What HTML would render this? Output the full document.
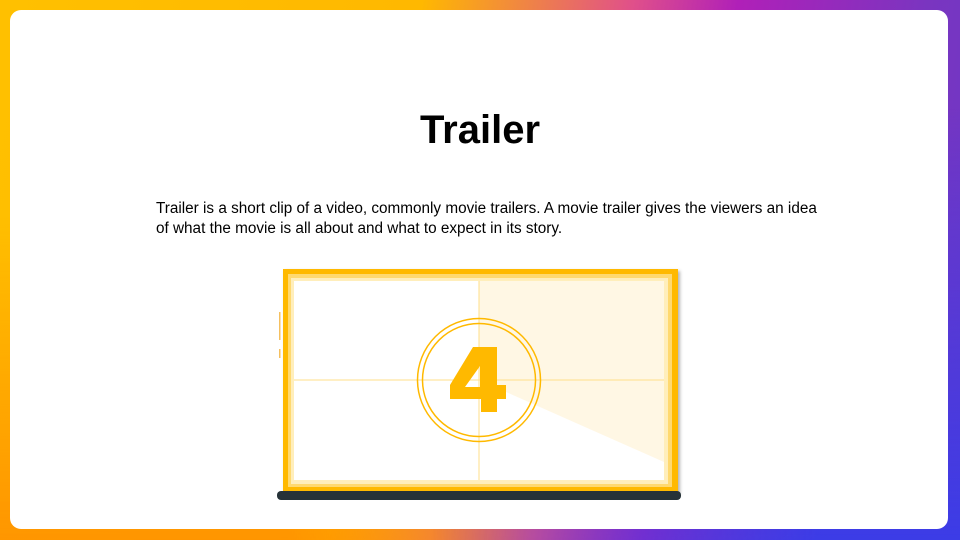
<!DOCTYPE html>
<html><head><style>
html,body{margin:0;padding:0}
body{width:960px;height:540px;position:relative;overflow:hidden;font-family:"Liberation Sans",Arial,sans-serif;
background:linear-gradient(100deg,#ffc000 0%,#ffb800 40%,#e0508a 60%,#b020b8 70%,#7a35c0 88%,#6a38c8 100%);}
.bl{position:absolute;left:0;top:0;width:960px;height:540px;
background:linear-gradient(180deg,rgba(255,140,0,0) 0%,rgba(255,140,0,0) 40%,rgba(255,140,0,.8) 100%);
-webkit-mask:linear-gradient(90deg,#000 0%,#000 30%,transparent 55%);}
.br{position:absolute;left:0;top:0;width:960px;height:540px;
background:linear-gradient(180deg,rgba(60,60,230,0) 20%,rgba(60,60,230,1) 100%);
-webkit-mask:linear-gradient(90deg,transparent 45%,#000 85%);}
.card{position:absolute;left:10px;top:10px;width:938px;height:519px;background:#fff;border-radius:11px;}
h1{position:absolute;left:0;width:960px;top:108px;margin:0;text-align:center;font-size:40px;font-weight:bold;color:#000;}
p{position:absolute;left:156px;top:199px;margin:0;width:672px;font-size:15.3px;line-height:20px;color:#000;}
</style></head><body>
<div class="bl"></div><div class="br"></div>
<div class="card"></div>
<h1>Trailer</h1>
<p>Trailer is a short clip of a video, commonly movie trailers. A movie trailer gives the viewers an idea of what the movie is all about and what to expect in its story.</p>
<svg style="position:absolute;left:0;top:0" width="960" height="540">
<defs><filter id="s" x="-5%" y="-5%" width="110%" height="110%"><feDropShadow dx="2" dy="2" stdDeviation="1.5" flood-color="#000" flood-opacity=".3"/></filter></defs>
<rect x="279" y="312" width="1.5" height="28" fill="#f5c060"/>
<rect x="279" y="349" width="1.5" height="9" fill="#f5c060"/>
<rect x="283" y="269" width="395" height="224" fill="#ffb900" filter="url(#s)"/>
<rect x="288" y="274" width="384" height="213" fill="#ffd970"/>
<rect x="291" y="278" width="377" height="206" fill="#ffeebb"/>
<rect x="294" y="281" width="370" height="199" fill="#fff"/>
<polygon points="479,281 664,281 664,462 479,380" fill="#fff7e4"/>
<line x1="479" y1="281" x2="479" y2="480" stroke="#ffdf8a" stroke-width="1"/>
<line x1="294" y1="380" x2="664" y2="380" stroke="#ffdf8a" stroke-width="1"/>
<circle cx="479" cy="380" r="61.5" fill="none" stroke="#ffb900" stroke-width="1.5"/>
<circle cx="479" cy="380" r="56.5" fill="none" stroke="#ffb900" stroke-width="1.5"/>
<path d="M473 347 H497 V385 H506 V399 H497 V412 H481 V399 H450 V385 Z M480 366 L465 387 H480 Z" fill="#ffb900" fill-rule="evenodd"/>
<rect x="277" y="491" width="404" height="9" rx="4" fill="#263238"/>
</svg>
</body></html>
